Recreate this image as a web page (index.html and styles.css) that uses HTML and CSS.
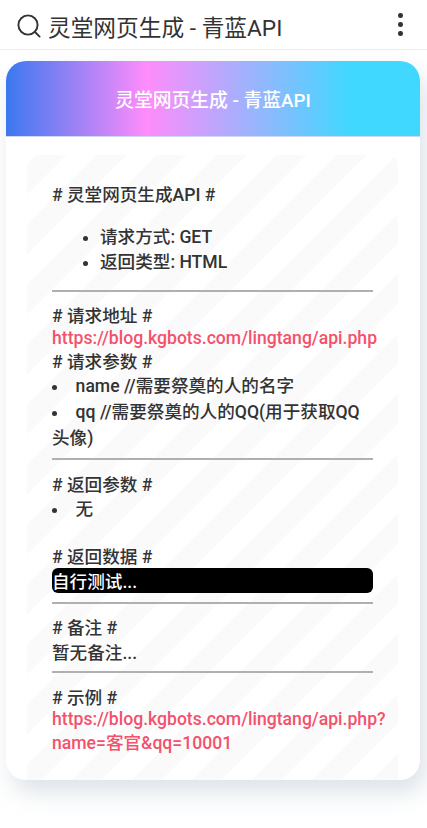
FILE: index.html
```html
<!DOCTYPE html>
<html lang="zh-CN">
<head>
    <meta charset="UTF-8">
    <meta name="viewport" content="width=device-width, initial-scale=1.0">
    <title>灵堂网页生成 - 青蓝API</title>
    <link rel="stylesheet" href="styles.css">
</head>
<body>
    <!-- Browser top bar -->
    <div class="top-bar">
        <svg class="search-icon" viewBox="0 0 24 24" width="24" height="24" fill="none" stroke="#333" stroke-width="1.9" stroke-linecap="round">
            <circle cx="11" cy="11" r="9.6"/>
            <path d="M18 18L22.6 22.6"/>
        </svg>
        <span class="top-title">灵堂网页生成 - 青蓝API</span>
        <div class="menu-dots"><i></i><i></i><i></i></div>
    </div>

    <div class="card">
        <div class="card-header">灵堂网页生成 - 青蓝API</div>
        <div class="card-body">
            <div class="doc">
                <p># 灵堂网页生成API #</p>
                <ul class="info-list">
                    <li>请求方式: GET</li>
                    <li>返回类型: HTML</li>
                </ul>
                <hr>
                <p># 请求地址 #</p>
                <p class="url"><a href="#">https://blog.kgbots.com/lingtang/api.php</a></p>
                <p># 请求参数 #</p>
                <ul class="param-list">
                    <li>name //需要祭奠的人的名字</li>
                    <li>qq //需要祭奠的人的QQ(用于获取QQ头像)</li>
                </ul>
                <hr>
                <p># 返回参数 #</p>
                <ul class="param-list gap-after">
                    <li>无</li>
                </ul>
                <p># 返回数据 #</p>
                <pre class="code">自行测试...</pre>
                <hr>
                <p># 备注 #</p>
                <p class="note">暂无备注...</p>
                <hr>
                <p># 示例 #</p>
                <p><a href="#">https://blog.kgbots.com/lingtang/api.php?<br>name=客官&amp;qq=10001</a></p>
            </div>
        </div>
    </div>
</body>
</html>
```

FILE: styles.css
```css
* {
    box-sizing: border-box;
}

body {
    margin: 0;
    height: 828px;
    overflow: hidden;
    background-color: #fff;
    font-family: Roboto, "Noto Sans CJK SC", sans-serif;
    color: #333;
}

/* Top bar */
.top-bar {
    height: 50px;
    display: flex;
    align-items: center;
    padding: 3px 24px 0 17px;
    background-color: #fff;
    border-bottom: 1px solid #eceef0;
}

.search-icon {
    flex: none;
    margin-right: 7px;
}

.top-title {
    flex: 1;
    font-size: 22.7px;
    color: #333;
}

.menu-dots {
    display: flex;
    flex-direction: column;
    gap: 4.7px;
    margin-top: -3px;
}

.menu-dots i {
    display: block;
    width: 4.6px;
    height: 4.6px;
    border-radius: 50%;
    background-color: #333;
}

/* Card */
.card {
    margin: 11px 7px 0 6px;
    height: 719px;
    border-radius: 20px;
    background-color: #fff;
    box-shadow: 6px 12px 24px rgba(110, 135, 160, 0.24);
    overflow: hidden;
}

.card-header {
    height: 76px;
    display: flex;
    align-items: center;
    justify-content: center;
    background: linear-gradient(90deg, #3b78f0 0%, #ff8cfb 34%, #40d8ff 83%);
    border-bottom: 1px solid #d0d4f5;
    color: #fff;
    font-size: 18.8px;
    font-weight: 500;
}

.card-body {
    padding: 18px 22px 0 21px;
}

/* Striped panel */
.doc {
    height: 625px;
    padding: 26px 25px 0 25px;
    border-radius: 10px 10px 0 0;
    background: linear-gradient(135deg, #fafafa 25%, #fff 25%, #fff 50%, #fafafa 50%, #fafafa 75%, #fff 75%);
    background-size: 60px 60px;
    background-position: 10px 0;
    font-size: 17.6px;
    font-weight: 500;
}

.doc p {
    margin: 0;
}

.doc .url {
    margin-top: 1px;
}

.info-list {
    margin: 17px 0 16.5px;
    padding-left: 48px;
}

.param-list {
    margin: 0 0 7px;
    padding: 0;
    line-height: 26px;
    list-style-position: inside;
}

.doc .gap-after {
    margin-bottom: 21px;
}

.doc .note {
    margin-bottom: 7px;
}

hr {
    margin: 0 0 10.5px;
    border: 0;
    border-top: 2px solid #b0b0b0;
}

a {
    color: #f4516c;
    text-decoration: none;
    white-space: nowrap;
}

.code {
    margin: 0 0 8.5px;
    height: 25.5px;
    border-radius: 6px;
    background-color: #000;
    color: #fff;
    font: inherit;
}
```
